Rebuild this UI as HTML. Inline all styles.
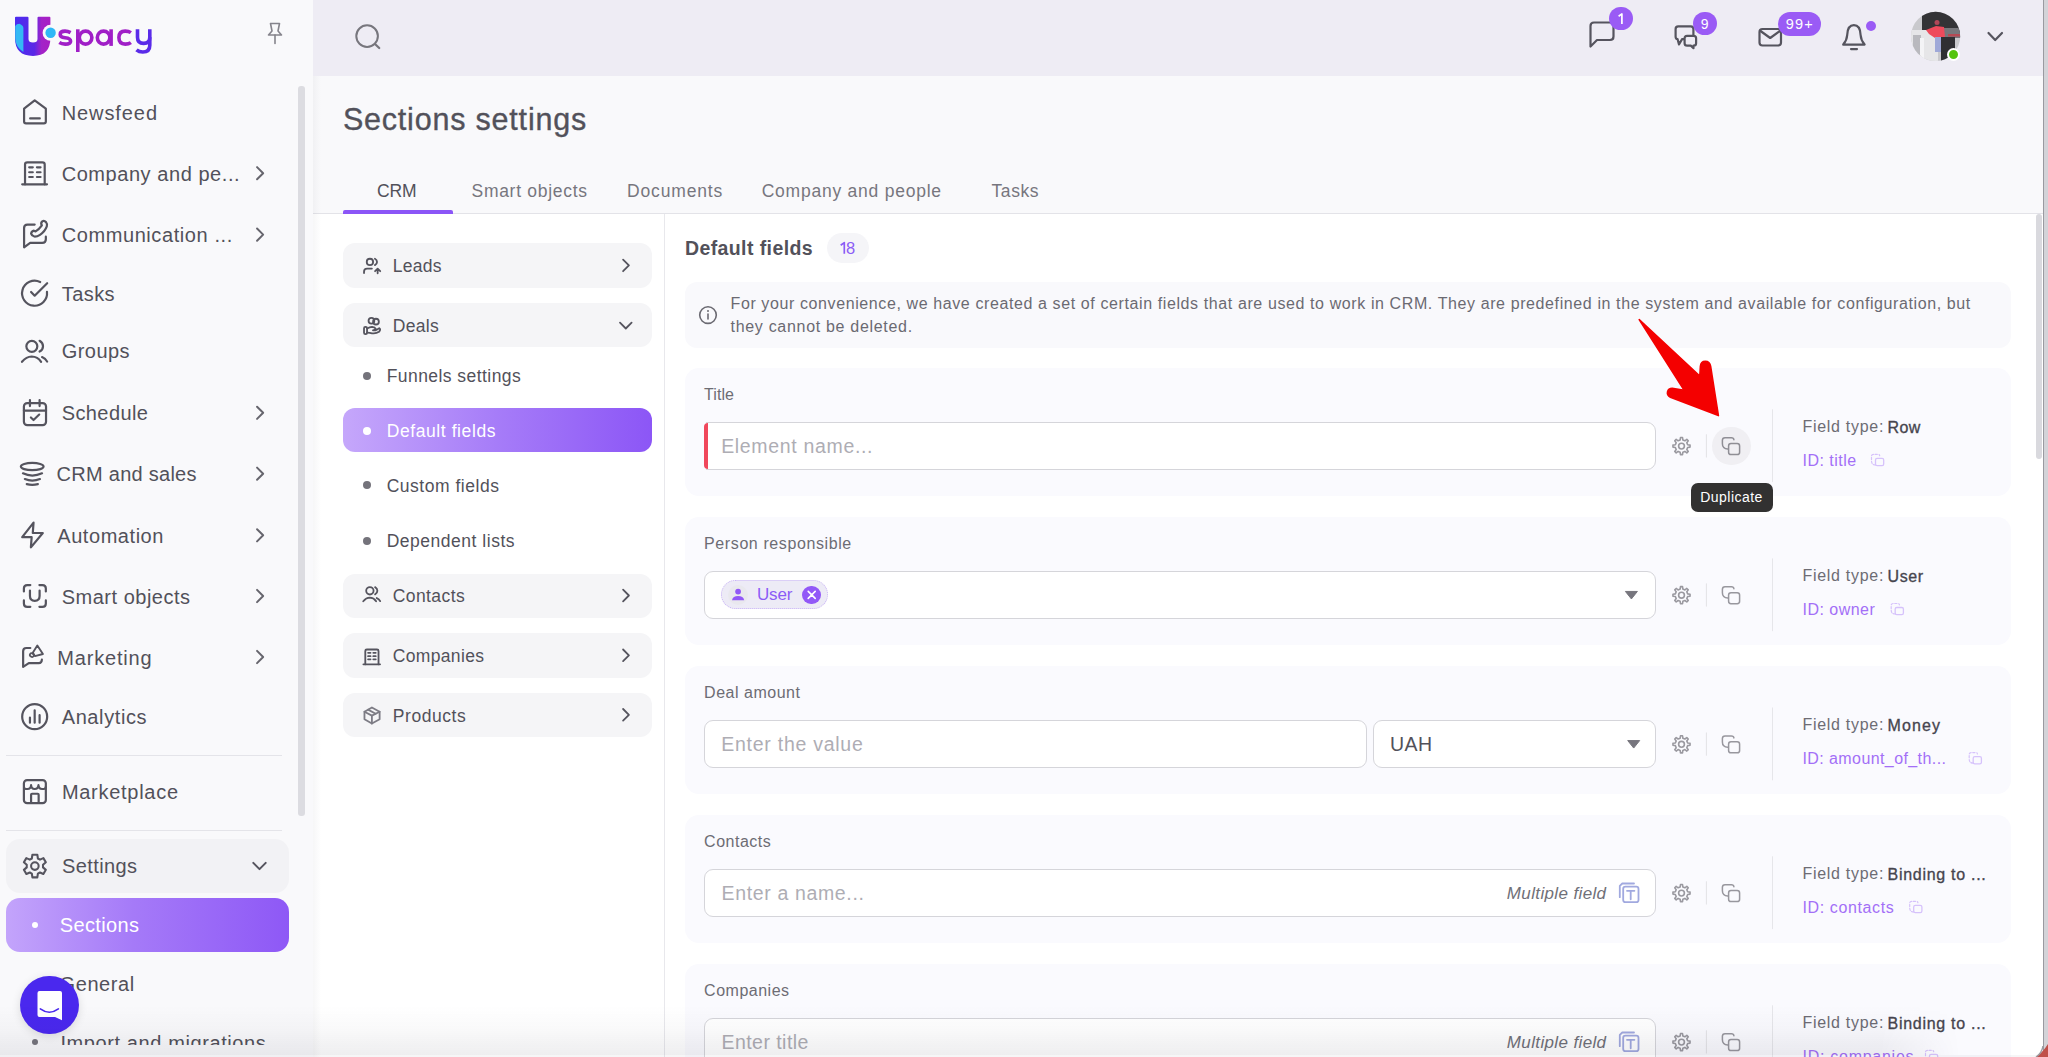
<!DOCTYPE html>
<html><head><meta charset="utf-8">
<style>
*{box-sizing:border-box;margin:0;padding:0}
html,body{width:2048px;height:1057px;overflow:hidden;background:#fff;font-family:"Liberation Sans",sans-serif;color:#4a4953}
.a{position:absolute}
.t{position:absolute;white-space:nowrap}
svg.ov{position:absolute;left:0;top:0;overflow:visible}
.s{fill:none;stroke:#55545e;stroke-width:2;stroke-linecap:round;stroke-linejoin:round}
.card{position:absolute;border-radius:12px;background:#f5f5f7}
.fc{position:absolute;left:685px;width:1326px;height:128px;border-radius:14px;background:#fafafe}
.inp{position:absolute;background:#fff;border:1px solid #d5d5da;border-radius:9px}
</style></head><body>

<div class="a" style="left:0;top:0;width:313px;height:1057px;background:#f9f9fb"></div>
<div class="a" style="left:313px;top:0;width:1730px;height:75.5px;background:#eeecf4"></div>
<div class="a" style="left:313px;top:75.5px;width:1730px;height:137.5px;background:#f9f9fb"></div>
<div class="a" style="left:313px;top:213px;width:1730px;height:1px;background:#e3e3e8"></div>
<div class="a" style="left:313px;top:75.5px;width:8px;height:982px;background:linear-gradient(90deg,rgba(20,20,40,0.035),rgba(20,20,40,0))"></div>
<svg class="ov" width="160" height="80" style="left:0;top:0">
<defs>
<linearGradient id="lgU" x1="0" y1="0" x2="1" y2="0"><stop offset="0" stop-color="#4b2cf0"/><stop offset="0.55" stop-color="#5a28e6"/><stop offset="0.75" stop-color="#a323c8"/><stop offset="1" stop-color="#a81fc3"/></linearGradient>
</defs>
<path d="M15 17.5 Q15 16.8 16 16.8 H27.5 Q28.5 16.8 28.5 17.8 V39 Q28.5 42.5 33 42.5 Q37.5 42.5 37.5 39 V17.8 Q37.5 16.8 38.5 16.8 H49.5 Q50.4 16.8 50.4 17.8 V38 Q50.4 55.9 33 55.9 Q15 55.9 15 38 Z" fill="url(#lgU)"/>
<path d="M15.2 26 Q16.5 23.8 19.5 23.8 Q23.4 25.5 23.4 28 V52 Q15.2 47 15.2 38 Z" fill="#34b9f4"/>
<circle cx="50.6" cy="32.8" r="8" fill="#f9f9fb"/>
<circle cx="50.6" cy="32.8" r="5.2" fill="#2fb8f6"/>
</svg>
<svg class="ov" width="160" height="80"><g fill="none" stroke-width="3.6" stroke-linecap="butt">
<path stroke="#a01fc7" d="M70.6 32.6 Q68 31.1 65 31.1 Q60.2 31.1 60.2 34.4 Q60.2 37.2 65 37.8 Q70.6 38.4 70.6 41.2 Q70.6 44.1 65.2 44.1 Q61.6 44.1 59.3 42.6"/>
<path stroke="#a01fc7" d="M77.8 29.3 V52"/><ellipse stroke="#a01fc7" cx="85.6" cy="37.6" rx="6.3" ry="6.5"/>
<ellipse stroke="#a01fc7" cx="103.6" cy="37.6" rx="6.3" ry="6.5"/><path stroke="#a01fc7" d="M111.1 29.3 V45.9"/>
<path stroke="#a01fc7" d="M130.9 32.6 Q128.8 31.1 125.2 31.1 Q118.9 31.1 118.9 37.6 Q118.9 44.1 125.2 44.1 Q128.8 44.1 130.9 42.6"/>
<path stroke="#5a2be9" d="M137.5 29.3 V37.2 Q137.5 43.4 143.6 43.4 Q149.8 43.4 149.8 37.2"/><path stroke="#5a2be9" d="M149.8 29.3 V45.2 Q149.8 52 142.8 52 Q139 52 136.5 49.8"/>
</g></svg>
<svg class="ov" width="300" height="60" style="left:0;top:0"><g class="s" style="stroke:#85848c;stroke-width:1.6">
<path d="M270.5 23.5 H279.5 L278 31 L281.5 35 H268.5 L272 31 Z"/><path d="M275 35 V43.5"/></g></svg>
<div class="a" style="left:297.5px;top:85.5px;width:7.2px;height:730px;border-radius:3px;background:#dcdce1"></div>
<svg class="ov" width="40" height="40" viewBox="0 0 1057 1057" style="left:15px;top:90px"><g fill="none" stroke="#55545e" stroke-width="58" stroke-linecap="round" stroke-linejoin="round" ><path d="M240 490 L520 272 L815 490 V830 Q815 880 765 880 H290 Q240 880 240 830 Z"/><path d="M400 750 H655"/></g></svg>
<div class="t" style="left:61.70px;top:103.07px;font-size:20px;line-height:20px;color:#52515a;letter-spacing:0.913px;">Newsfeed</div>
<svg class="ov" width="40" height="40" viewBox="0 0 1057 1057" style="left:15px;top:152px"><g fill="none" stroke="#55545e" stroke-width="58" stroke-linecap="round" stroke-linejoin="round" ><path d="M265 855 V330 Q265 272 325 272 H725 Q785 272 785 330 V855"/><path d="M190 855 H845"/><path d="M375 405 H470 M580 405 H675 M375 535 H470 M580 535 H675 M375 660 H470 M580 660 H675"/></g></svg>
<div class="t" style="left:61.70px;top:163.87px;font-size:20px;line-height:20px;color:#52515a;letter-spacing:0.554px;">Company and pe...</div>
<svg class="ov" width="2048" height="1057" style="left:0;top:0;pointer-events:none"><path d="M257.05 167.10 L263.15 173.20 L257.05 179.30" fill="none" stroke="#66656d" stroke-width="2" stroke-linecap="round" stroke-linejoin="round"/></svg>
<svg class="ov" width="40" height="40" viewBox="0 0 1057 1057" style="left:15px;top:214px"><g fill="none" stroke="#55545e" stroke-width="58" stroke-linecap="round" stroke-linejoin="round" ><path d="M520 280 H330 Q240 280 240 370 V880 L400 765 H720 Q815 765 815 670 V600"/><path d="M545 460 Q640 400 710 300 Q670 240 720 195 Q770 165 820 215 Q860 260 840 330 Q790 470 660 550 Q580 600 510 595 Q445 580 425 520 Q440 450 500 440 Z"/></g></svg>
<div class="t" style="left:61.70px;top:225.27px;font-size:20px;line-height:20px;color:#52515a;letter-spacing:0.587px;">Communication ...</div>
<svg class="ov" width="2048" height="1057" style="left:0;top:0;pointer-events:none"><path d="M257.05 228.50 L263.15 234.60 L257.05 240.70" fill="none" stroke="#66656d" stroke-width="2" stroke-linecap="round" stroke-linejoin="round"/></svg>
<svg class="ov" width="40" height="40" viewBox="0 0 1057 1057" style="left:15px;top:273px"><g fill="none" stroke="#55545e" stroke-width="58" stroke-linecap="round" stroke-linejoin="round" ><path d="M665 240 A 330 330 0 1 0 845 500"/><path d="M425 500 L520 600 L850 270"/></g></svg>
<div class="t" style="left:61.70px;top:283.67px;font-size:20px;line-height:20px;color:#52515a;letter-spacing:0.444px;">Tasks</div>
<svg class="ov" width="40" height="40" viewBox="0 0 1057 1057" style="left:15px;top:334px"><g fill="none" stroke="#55545e" stroke-width="58" stroke-linecap="round" stroke-linejoin="round" ><circle cx="445" cy="325" r="145"/><path d="M650 180 Q740 230 740 325 Q740 420 650 465"/><path d="M185 735 Q300 600 440 595 Q600 600 690 735"/><path d="M715 610 Q810 650 850 730"/></g></svg>
<div class="t" style="left:61.70px;top:341.47px;font-size:20px;line-height:20px;color:#52515a;letter-spacing:0.463px;">Groups</div>
<svg class="ov" width="40" height="40" viewBox="0 0 1057 1057" style="left:15px;top:393px"><g fill="none" stroke="#55545e" stroke-width="58" stroke-linecap="round" stroke-linejoin="round" ><rect x="235" y="265" width="585" height="585" rx="90"/><path d="M395 185 V345 M650 185 V345"/><path d="M235 465 H820"/><path d="M420 645 L490 715 L640 570"/></g></svg>
<div class="t" style="left:61.70px;top:403.47px;font-size:20px;line-height:20px;color:#52515a;letter-spacing:0.404px;">Schedule</div>
<svg class="ov" width="2048" height="1057" style="left:0;top:0;pointer-events:none"><path d="M257.05 406.70 L263.15 412.80 L257.05 418.90" fill="none" stroke="#66656d" stroke-width="2" stroke-linecap="round" stroke-linejoin="round"/></svg>
<svg class="ov" width="40" height="40" viewBox="0 0 1057 1057" style="left:15px;top:455px"><g fill="none" stroke="#55545e" stroke-width="58" stroke-linecap="round" stroke-linejoin="round" ><ellipse cx="455" cy="305" rx="300" ry="95"/><path d="M210 485 Q455 600 715 485"/><path d="M260 635 Q455 715 660 635"/><path d="M310 770 Q455 810 605 770"/></g></svg>
<div class="t" style="left:56.60px;top:464.37px;font-size:20px;line-height:20px;color:#52515a;letter-spacing:0.265px;">CRM and sales</div>
<svg class="ov" width="2048" height="1057" style="left:0;top:0;pointer-events:none"><path d="M257.05 467.60 L263.15 473.70 L257.05 479.80" fill="none" stroke="#66656d" stroke-width="2" stroke-linecap="round" stroke-linejoin="round"/></svg>
<svg class="ov" width="40" height="40" viewBox="0 0 1057 1057" style="left:15px;top:515px"><g fill="none" stroke="#55545e" stroke-width="58" stroke-linecap="round" stroke-linejoin="round" ><path d="M490 200 L190 585 H440 L420 855 L735 475 H470 Z"/></g></svg>
<div class="t" style="left:57.30px;top:525.97px;font-size:20px;line-height:20px;color:#52515a;letter-spacing:0.55px;">Automation</div>
<svg class="ov" width="2048" height="1057" style="left:0;top:0;pointer-events:none"><path d="M257.05 529.20 L263.15 535.30 L257.05 541.40" fill="none" stroke="#66656d" stroke-width="2" stroke-linecap="round" stroke-linejoin="round"/></svg>
<svg class="ov" width="40" height="40" viewBox="0 0 1057 1057" style="left:15px;top:576px"><g fill="none" stroke="#55545e" stroke-width="58" stroke-linecap="round" stroke-linejoin="round" ><path d="M235 410 V330 Q235 240 325 240 H405"/><path d="M645 240 H725 Q815 240 815 330 V410"/><path d="M235 645 V725 Q235 815 325 815 H405"/><path d="M645 815 H725 Q815 815 815 725 V645"/><path d="M395 385 V530 Q395 655 522 655 Q650 655 650 530 V385"/></g></svg>
<div class="t" style="left:61.70px;top:586.67px;font-size:20px;line-height:20px;color:#52515a;letter-spacing:0.511px;">Smart objects</div>
<svg class="ov" width="2048" height="1057" style="left:0;top:0;pointer-events:none"><path d="M257.05 589.90 L263.15 596.00 L257.05 602.10" fill="none" stroke="#66656d" stroke-width="2" stroke-linecap="round" stroke-linejoin="round"/></svg>
<svg class="ov" width="40" height="40" viewBox="0 0 1057 1057" style="left:15px;top:637px"><g fill="none" stroke="#55545e" stroke-width="58" stroke-linecap="round" stroke-linejoin="round" ><path d="M405 290 H300 Q215 290 215 375 V790 L365 690 H630 Q705 690 710 600"/><path d="M590 225 L738 450 L525 505 L470 415 Z" stroke-width="50"/><ellipse cx="445" cy="478" rx="55" ry="45" transform="rotate(35 445 478)" stroke-width="45"/></g></svg>
<div class="t" style="left:57.30px;top:647.67px;font-size:20px;line-height:20px;color:#52515a;letter-spacing:0.814px;">Marketing</div>
<svg class="ov" width="2048" height="1057" style="left:0;top:0;pointer-events:none"><path d="M257.05 650.90 L263.15 657.00 L257.05 663.10" fill="none" stroke="#66656d" stroke-width="2" stroke-linecap="round" stroke-linejoin="round"/></svg>
<svg class="ov" width="40" height="40" viewBox="0 0 1057 1057" style="left:15px;top:697px"><g fill="none" stroke="#55545e" stroke-width="58" stroke-linecap="round" stroke-linejoin="round" ><circle cx="520" cy="520" r="330"/><path d="M395 545 V680 M520 350 V680 M650 480 V680"/></g></svg>
<div class="t" style="left:61.70px;top:706.67px;font-size:20px;line-height:20px;color:#52515a;letter-spacing:0.609px;">Analytics</div>
<svg class="ov" width="40" height="40" viewBox="0 0 1057 1057" style="left:15px;top:772px"><g fill="none" stroke="#55545e" stroke-width="58" stroke-linecap="round" stroke-linejoin="round" ><rect x="235" y="215" width="580" height="610" rx="85"/><path d="M240 400 Q240 450 330 450 Q420 450 425 345 Q430 450 520 450 Q610 450 620 345 Q630 450 715 450 Q810 450 810 400" stroke-width="55"/><path d="M425 810 V600 Q425 575 450 575 H600 Q625 575 625 600 V810"/></g></svg>
<div class="t" style="left:61.90px;top:781.97px;font-size:20px;line-height:20px;color:#52515a;letter-spacing:0.719px;">Marketplace</div>
<div class="a" style="left:6px;top:754.5px;width:276px;height:1px;background:#e4e4e9"></div>
<div class="a" style="left:6px;top:829.5px;width:276px;height:1px;background:#e4e4e9"></div>
<div class="a" style="left:6px;top:839px;width:283px;height:54px;border-radius:14px;background:#f2f2f5"></div>
<svg class="ov" width="40" height="40" viewBox="0 0 1057 1057" style="left:15px;top:846px"><g fill="none" stroke="#55545e" stroke-width="58" stroke-linecap="round" stroke-linejoin="round" ><path d="M460 230 H590 L605 330 L660 360 L750 320 L815 430 L740 495 V565 L815 630 L750 740 L660 700 L605 730 L590 830 H460 L445 730 L390 700 L300 740 L235 630 L310 565 V495 L235 430 L300 320 L390 360 L445 330 Z" stroke-width="55"/><circle cx="525" cy="530" r="100" stroke-width="55"/></g></svg>
<div class="t" style="left:61.90px;top:856.07px;font-size:20px;line-height:20px;color:#52515a;letter-spacing:0.419px;">Settings</div>
<svg class="ov" width="2048" height="1057" style="left:0;top:0;pointer-events:none"><path d="M253.30 862.90 L259.50 869.10 L265.70 862.90" fill="none" stroke="#55545e" stroke-width="2" stroke-linecap="round" stroke-linejoin="round"/></svg>
<div class="a" style="left:6px;top:898px;width:283px;height:54px;border-radius:14px;background:linear-gradient(90deg,#c3a4fb 0%,#a57af8 45%,#8e58f6 100%)"></div>
<div class="a" style="left:32px;top:922px;width:6px;height:6px;border-radius:50%;background:#fff"></div>
<div class="t" style="left:59.80px;top:915.07px;font-size:20px;line-height:20px;color:#ffffff;letter-spacing:0.342px;">Sections</div>
<div class="a" style="left:32px;top:981px;width:6px;height:6px;border-radius:50%;background:#76757d"></div>
<div class="t" style="left:59.50px;top:974.07px;font-size:20px;line-height:20px;color:#52515a;letter-spacing:0.6px;">General</div>
<div class="a" style="left:0;top:1050px;width:313px;height:7px;background:#f9f9fb;z-index:0"></div>
<div class="a" style="left:0;top:1020px;width:313px;height:25px;overflow:hidden"><div class="t" style="left:60.4px;top:12.77px;font-size:20px;line-height:20px;color:#52515a;letter-spacing:0.6px">Import and migrations</div></div>
<div class="a" style="left:32px;top:1039px;width:6px;height:6px;border-radius:50%;background:#76757d"></div>
<div class="a" style="left:20px;top:975.5px;width:58.6px;height:58.6px;border-radius:50%;background:#4a28ee;box-shadow:0 2px 10px rgba(0,0,0,0.12)"></div>
<svg class="ov" width="2048" height="1057"><path d="M37.5 993 Q37.5 991 39.5 991 H60 Q62 991 62 993 V1020.2 L55 1017 H39.5 Q37.5 1017 37.5 1015 Z" fill="#fff"/>
<path d="M40.3 1008.9 Q49.3 1015.5 58.4 1008.9" fill="none" stroke="#4a28ee" stroke-width="1.6" stroke-linecap="round"/></svg>
<svg class="ov" width="2048" height="80"><g fill="none" stroke="#77767d" stroke-width="2" stroke-linecap="round" stroke-linejoin="round">
<circle cx="367.1" cy="36.1" r="10.8"/><path d="M375 44 L379.2 48" stroke-width="2.3"/></g></svg>
<svg class="ov" width="2048" height="80"><g fill="none" stroke="#55545e" stroke-width="2.2" stroke-linecap="round" stroke-linejoin="round">
<path d="M1590.5 46.5 V26 Q1590.5 22.5 1594 22.5 H1610 Q1613.5 22.5 1613.5 26 V36.5 Q1613.5 40 1610 40 H1597 Z"/>
<path d="M1693.4 36 V29 Q1693.4 26.4 1690.8 26.4 H1678.2 Q1675.6 26.4 1675.6 29 V36.5 Q1675.6 39 1677.6 39.2 L1679 44.4 L1682 39.2 H1684.6"/>
<path d="M1684.6 43.2 V38.3 Q1684.6 35.8 1687.1 35.8 H1693.6 Q1696.1 35.8 1696.1 38.3 V43.2 Q1696.1 45.6 1693.6 45.6 H1693.5 V48.2 L1690.8 45.6 H1687.1 Q1684.6 45.6 1684.6 43.2 Z" fill="#eeecf4"/>
<rect x="1759.5" y="29" width="21.5" height="16.5" rx="3"/><path d="M1760.5 31 L1770.2 38 L1780 31"/>
<path d="M1843.2 44.6 H1864.6 Q1861 40.5 1860.6 35 Q1860.2 25.2 1853.9 25.2 Q1847.6 25.2 1847.2 35 Q1846.8 40.5 1843.2 44.6 Z" />
<path d="M1851 49.1 H1857"/>
<path d="M1988.5 33 L1995.2 40 L2002 33"/>
</g></svg>
<div class="a" style="left:1609.2px;top:6.7px;width:23.8px;height:23.8px;border-radius:50%;background:#9a5bf5"></div>
<svg class="ov" width="2048" height="80"><path d="M1618.6 16.2 L1621.9 13.9 V23.9" fill="none" stroke="#fff" stroke-width="1.7" stroke-linejoin="round"/></svg>
<div class="a" style="left:1693.3px;top:11.7px;width:23.8px;height:23.8px;border-radius:50%;background:#9a5bf5"></div>
<div class="t" style="left:1700.70px;top:16.85px;font-size:14px;line-height:14px;color:#fff;">9</div>
<div class="a" style="left:1778.2px;top:11.7px;width:42.6px;height:24.3px;border-radius:12px;background:#9a5bf5"></div>
<div class="t" style="left:1785.80px;top:16.53px;font-size:14.5px;line-height:14.5px;color:#fff;letter-spacing:1.186px;">99+</div>
<div class="a" style="left:1865.7px;top:21px;width:10px;height:10px;border-radius:50%;background:#9a5bf5"></div>
<svg class="ov" width="2048" height="80"><defs><clipPath id="avc"><circle cx="1935.6" cy="36.4" r="24.6"/></clipPath></defs>
<g clip-path="url(#avc)">
<rect x="1910" y="11" width="52" height="52" fill="#c9c9cd"/>
<rect x="1922" y="11" width="40" height="22" fill="#333336"/>
<rect x="1940" y="28" width="22" height="10" fill="#77777c"/>
<rect x="1911" y="30" width="27" height="32" fill="#e6e6e8"/>
<rect x="1913" y="35" width="8" height="25" fill="#b9b9be"/>
<rect x="1920" y="38" width="4" height="22" fill="#f4f4f6"/>
<path d="M1926 30 L1936 26 L1944 27 L1945 37 L1935 38 L1929 34 Z" fill="#ee4a5c"/>
<circle cx="1937" cy="22.5" r="2.5" fill="#b04758"/>
<rect x="1935" y="37" width="6" height="15" fill="#9fa9d8"/>
<rect x="1941" y="37" width="14" height="24" fill="#2f2f33"/>
<rect x="1948" y="34" width="12" height="2.5" fill="#b44a54"/>
</g></svg>
<div class="a" style="left:1946.5px;top:47.5px;width:13.6px;height:13.6px;border-radius:50%;background:#55c40f;border:2.3px solid #fff"></div>
<div class="t" style="left:342.90px;top:104.38px;font-size:30.5px;line-height:30.5px;color:#52515a;letter-spacing:0.799px;-webkit-text-stroke:0.35px #52515a;">Sections settings</div>
<div class="t" style="left:377.00px;top:182.69px;font-size:17.5px;line-height:17.5px;color:#52515a;letter-spacing:-0.138px;">CRM</div>
<div class="t" style="left:471.50px;top:182.69px;font-size:17.5px;line-height:17.5px;color:#77767e;letter-spacing:0.714px;">Smart objects</div>
<div class="t" style="left:627.00px;top:182.69px;font-size:17.5px;line-height:17.5px;color:#77767e;letter-spacing:0.843px;">Documents</div>
<div class="t" style="left:761.70px;top:182.69px;font-size:17.5px;line-height:17.5px;color:#77767e;letter-spacing:0.763px;">Company and people</div>
<div class="t" style="left:991.60px;top:182.69px;font-size:17.5px;line-height:17.5px;color:#77767e;letter-spacing:0.529px;">Tasks</div>
<div class="a" style="left:343px;top:210px;width:109.5px;height:3.5px;border-radius:2px 2px 0 0;background:#8b55f7"></div>
<div class="a" style="left:664px;top:214px;width:1px;height:843px;background:#e8e8ec"></div>
<div class="card" style="left:343px;top:243.4px;width:309px;height:44.3px"></div>
<div class="card" style="left:343px;top:303.1px;width:309px;height:44.3px"></div>
<div class="card" style="left:343px;top:573.5px;width:309px;height:44.3px"></div>
<div class="card" style="left:343px;top:633.3px;width:309px;height:44.3px"></div>
<div class="card" style="left:343px;top:692.8px;width:309px;height:44.3px"></div>
<svg class="ov" width="32" height="32" viewBox="0 0 1057 1057" style="left:356px;top:250.0px"><g fill="none" stroke="#55545e" stroke-width="60" stroke-linecap="round" stroke-linejoin="round"><circle cx="460" cy="395" r="105"/><path d="M625 290 Q695 330 695 395 Q695 460 625 500"/><path d="M265 760 V715 Q265 615 365 615 H525"/><path d="M715 770 V615 M630 700 L715 615 L800 700"/></g></svg>
<div class="t" style="left:392.80px;top:258.39px;font-size:17.5px;line-height:17.5px;color:#52515a;letter-spacing:0.242px;">Leads</div>
<svg class="ov" width="2048" height="1057" style="left:0;top:0;pointer-events:none"><path d="M623.10 259.60 L628.90 265.40 L623.10 271.20" fill="none" stroke="#55545e" stroke-width="1.8" stroke-linecap="round" stroke-linejoin="round"/></svg>
<svg class="ov" width="32" height="32" viewBox="0 0 1057 1057" style="left:356px;top:309.70000000000005px"><g fill="none" stroke="#55545e" stroke-width="60" stroke-linecap="round" stroke-linejoin="round"><circle cx="510" cy="355" r="95"/><circle cx="660" cy="385" r="95"/><rect x="265" y="560" width="100" height="235" rx="45"/><path d="M370 610 Q450 570 530 560 Q630 575 650 620 Q630 660 560 670 H640 Q720 640 770 600 Q830 640 760 720 Q660 790 530 770 Q460 750 370 745"/></g></svg>
<div class="t" style="left:392.80px;top:318.09px;font-size:17.5px;line-height:17.5px;color:#52515a;letter-spacing:0.3px;">Deals</div>
<svg class="ov" width="2048" height="1057" style="left:0;top:0;pointer-events:none"><path d="M620.00 322.70 L625.80 328.50 L631.60 322.70" fill="none" stroke="#55545e" stroke-width="1.8" stroke-linecap="round" stroke-linejoin="round"/></svg>
<svg class="ov" width="32" height="32" viewBox="0 0 1057 1057" style="left:356px;top:580.1px"><g fill="none" stroke="#55545e" stroke-width="72" stroke-linecap="round" stroke-linejoin="round" transform="translate(528 528) scale(0.84) translate(-528 -528)"><circle cx="445" cy="325" r="145"/><path d="M650 180 Q740 230 740 325 Q740 420 650 465"/><path d="M185 735 Q300 600 440 595 Q600 600 690 735"/><path d="M715 610 Q810 650 850 730"/></g></svg>
<div class="t" style="left:392.80px;top:588.49px;font-size:17.5px;line-height:17.5px;color:#52515a;letter-spacing:0.399px;">Contacts</div>
<svg class="ov" width="2048" height="1057" style="left:0;top:0;pointer-events:none"><path d="M623.10 589.70 L628.90 595.50 L623.10 601.30" fill="none" stroke="#55545e" stroke-width="1.8" stroke-linecap="round" stroke-linejoin="round"/></svg>
<svg class="ov" width="32" height="32" viewBox="0 0 1057 1057" style="left:356px;top:639.9px"><g fill="none" stroke="#55545e" stroke-width="72" stroke-linecap="round" stroke-linejoin="round" transform="translate(528 528) scale(0.84) translate(-528 -528)"><path d="M265 855 V330 Q265 272 325 272 H725 Q785 272 785 330 V855"/><path d="M190 855 H845"/><path d="M375 405 H470 M580 405 H675 M375 535 H470 M580 535 H675 M375 660 H470 M580 660 H675"/></g></svg>
<div class="t" style="left:392.80px;top:648.29px;font-size:17.5px;line-height:17.5px;color:#52515a;letter-spacing:0.329px;">Companies</div>
<svg class="ov" width="2048" height="1057" style="left:0;top:0;pointer-events:none"><path d="M623.10 649.50 L628.90 655.30 L623.10 661.10" fill="none" stroke="#55545e" stroke-width="1.8" stroke-linecap="round" stroke-linejoin="round"/></svg>
<svg class="ov" width="32" height="32" viewBox="0 0 1057 1057" style="left:356px;top:699.4px"><g fill="none" stroke="#7d7c85" stroke-width="60" stroke-linecap="round" stroke-linejoin="round"><path d="M525 280 L780 420 V670 L525 810 L280 670 V420 Z"/><path d="M280 420 L525 550 L780 420 M525 550 V810"/><path d="M400 350 L650 485"/></g></svg>
<div class="t" style="left:392.80px;top:707.79px;font-size:17.5px;line-height:17.5px;color:#52515a;letter-spacing:0.541px;">Products</div>
<svg class="ov" width="2048" height="1057" style="left:0;top:0;pointer-events:none"><path d="M623.10 709.00 L628.90 714.80 L623.10 720.60" fill="none" stroke="#55545e" stroke-width="1.8" stroke-linecap="round" stroke-linejoin="round"/></svg>
<div class="a" style="left:363px;top:371.6px;width:8px;height:8px;border-radius:50%;background:#74737b"></div>
<div class="t" style="left:386.70px;top:368.39px;font-size:17.5px;line-height:17.5px;color:#52515a;letter-spacing:0.441px;">Funnels settings</div>
<div class="a" style="left:363px;top:481.3px;width:8px;height:8px;border-radius:50%;background:#74737b"></div>
<div class="t" style="left:386.70px;top:478.09px;font-size:17.5px;line-height:17.5px;color:#52515a;letter-spacing:0.52px;">Custom fields</div>
<div class="a" style="left:363px;top:536.7px;width:8px;height:8px;border-radius:50%;background:#74737b"></div>
<div class="t" style="left:386.70px;top:533.49px;font-size:17.5px;line-height:17.5px;color:#52515a;letter-spacing:0.516px;">Dependent lists</div>
<div class="a" style="left:343px;top:408.1px;width:309px;height:44.3px;border-radius:12px;background:linear-gradient(90deg,#c5a7fb 0%,#a67cf8 50%,#8c56f6 100%)"></div>
<div class="a" style="left:363px;top:426.5px;width:8px;height:8px;border-radius:50%;background:#fff"></div>
<div class="t" style="left:386.70px;top:422.99px;font-size:17.5px;line-height:17.5px;color:#fff;letter-spacing:0.584px;">Default fields</div>
<div class="t" style="left:684.90px;top:238.69px;font-size:19.5px;line-height:19.5px;color:#52515a;font-weight:700;letter-spacing:0.408px;">Default fields</div>
<div class="a" style="left:827.4px;top:233.4px;width:41.4px;height:29.6px;border-radius:15px;background:#f5f5f8"></div>
<svg class="ov" width="2048" height="1057"><path d="M840.7 245.2 L844.3 242.6 V253.7" fill="none" stroke="#8b5cf6" stroke-width="1.7" stroke-linejoin="round"/></svg>
<div class="t" style="left:846.10px;top:239.83px;font-size:16.5px;line-height:16.5px;color:#8b5cf6;">8</div>
<div class="a" style="left:685.4px;top:282.3px;width:1325.6px;height:65.7px;border-radius:12px;background:#f9f9fc"></div>
<svg class="ov" width="2048" height="1057"><g fill="none" stroke="#6b6a72" stroke-width="1.6" stroke-linecap="round"><circle cx="708" cy="315.1" r="8.3"/><path d="M708 314 V319"/></g><circle cx="708" cy="311" r="1" fill="#6b6a72"/></svg>
<div class="t" style="left:730.50px;top:296.26px;font-size:16px;line-height:16px;color:#6b6a72;letter-spacing:0.604px;">For your convenience, we have created a set of certain fields that are used to work in CRM. They are predefined in the system and available for configuration, but</div>
<div class="t" style="left:730.50px;top:319.36px;font-size:16px;line-height:16px;color:#6b6a72;letter-spacing:0.695px;">they cannot be deleted.</div>
<div class="fc" style="top:368.1px"></div>
<div class="t" style="left:704.10px;top:386.86px;font-size:16px;line-height:16px;color:#6d6c74;letter-spacing:0.066px;">Title</div>
<div class="inp" style="left:704.4px;top:422.2px;width:952px;height:47.6px"></div>
<div class="a" style="left:704.2px;top:422.8px;width:12px;height:46.4px;background:#fff;border-radius:5px 0 0 5px"></div>
<div class="a" style="left:706px;top:422.2px;width:12px;height:47.6px;border-top:1px solid #d5d5da;border-bottom:1px solid #d5d5da"></div>
<div class="a" style="left:704.2px;top:422.8px;width:4.2px;height:46.4px;background:#f0475c;border-radius:5px 0 0 5px"></div>
<div class="t" style="left:721.20px;top:437.39px;font-size:19.5px;line-height:19.5px;color:#aeadb4;letter-spacing:0.667px;">Element name...</div>
<div class="a" style="left:1712.4px;top:426.5px;width:38.6px;height:38.6px;border-radius:50%;background:#f0eff3"></div>
<div class="t" style="left:1802.50px;top:419.06px;font-size:16px;line-height:16px;color:#6d6c74;letter-spacing:0.703px;">Field type:</div>
<div class="t" style="left:1887.50px;top:419.56px;font-size:16px;line-height:16px;color:#46454e;letter-spacing:0.423px;-webkit-text-stroke:0.32px #46454e;">Row</div>
<div class="t" style="left:1802.50px;top:452.66px;font-size:16px;line-height:16px;color:#a36ff7;letter-spacing:0.476px;">ID: title</div>
<div class="fc" style="top:517.2px"></div>
<div class="t" style="left:704.10px;top:535.96px;font-size:16px;line-height:16px;color:#6d6c74;letter-spacing:0.596px;">Person responsible</div>
<div class="inp" style="left:704.4px;top:571.3px;width:952px;height:47.6px"></div>
<div class="a" style="left:721.2px;top:580px;width:106.6px;height:29.3px;border-radius:15px;background:#edebf6;border:1px dotted #c9b3f8"></div>
<div class="a" style="left:728px;top:585px;width:20px;height:20px;border-radius:50%;background:#e9e8ee"></div>
<div class="t" style="left:757.00px;top:586.11px;font-size:17px;line-height:17px;color:#8b5cf6;letter-spacing:-0.177px;">User</div>
<div class="a" style="left:802.4px;top:585.6px;width:18.6px;height:18.6px;border-radius:50%;background:#9258f7"></div>
<div class="t" style="left:1802.50px;top:568.16px;font-size:16px;line-height:16px;color:#6d6c74;letter-spacing:0.703px;">Field type:</div>
<div class="t" style="left:1887.50px;top:568.66px;font-size:16px;line-height:16px;color:#46454e;letter-spacing:0.616px;-webkit-text-stroke:0.32px #46454e;">User</div>
<div class="t" style="left:1802.50px;top:601.76px;font-size:16px;line-height:16px;color:#a36ff7;letter-spacing:0.482px;">ID: owner</div>
<div class="fc" style="top:666.3px"></div>
<div class="t" style="left:704.10px;top:685.06px;font-size:16px;line-height:16px;color:#6d6c74;letter-spacing:0.513px;">Deal amount</div>
<div class="inp" style="left:704.4px;top:720.4px;width:662.3px;height:47.6px"></div>
<div class="inp" style="left:1372.8px;top:720.4px;width:283.6px;height:47.6px"></div>
<div class="t" style="left:721.30px;top:735.39px;font-size:19.5px;line-height:19.5px;color:#aeadb4;letter-spacing:0.734px;">Enter the value</div>
<div class="t" style="left:1390.00px;top:735.19px;font-size:19.5px;line-height:19.5px;color:#52515a;letter-spacing:0.456px;">UAH</div>
<div class="t" style="left:1802.50px;top:717.26px;font-size:16px;line-height:16px;color:#6d6c74;letter-spacing:0.703px;">Field type:</div>
<div class="t" style="left:1887.50px;top:717.76px;font-size:16px;line-height:16px;color:#46454e;letter-spacing:1.094px;-webkit-text-stroke:0.32px #46454e;">Money</div>
<div class="t" style="left:1802.50px;top:750.86px;font-size:16px;line-height:16px;color:#a36ff7;letter-spacing:0.409px;">ID: amount_of_th...</div>
<div class="fc" style="top:815.1px"></div>
<div class="t" style="left:704.10px;top:833.86px;font-size:16px;line-height:16px;color:#6d6c74;letter-spacing:0.5px;">Contacts</div>
<div class="inp" style="left:704.4px;top:869.2px;width:952px;height:47.6px"></div>
<div class="t" style="left:721.50px;top:884.19px;font-size:19.5px;line-height:19.5px;color:#aeadb4;letter-spacing:0.65px;">Enter a name...</div>
<div class="t" style="left:1506.80px;top:884.71px;font-size:17px;line-height:17px;color:#707078;letter-spacing:0.367px;font-style:italic;">Multiple field</div>
<div class="t" style="left:1802.50px;top:866.06px;font-size:16px;line-height:16px;color:#6d6c74;letter-spacing:0.703px;">Field type:</div>
<div class="t" style="left:1887.50px;top:866.56px;font-size:16px;line-height:16px;color:#46454e;letter-spacing:0.715px;-webkit-text-stroke:0.32px #46454e;">Binding to ...</div>
<div class="t" style="left:1802.50px;top:899.66px;font-size:16px;line-height:16px;color:#a36ff7;letter-spacing:0.62px;">ID: contacts</div>
<div class="fc" style="top:964.1px"></div>
<div class="t" style="left:704.10px;top:982.86px;font-size:16px;line-height:16px;color:#6d6c74;letter-spacing:0.5px;">Companies</div>
<div class="inp" style="left:704.4px;top:1018.2px;width:952px;height:47.6px"></div>
<div class="t" style="left:721.50px;top:1033.19px;font-size:19.5px;line-height:19.5px;color:#aeadb4;letter-spacing:0.45px;">Enter title</div>
<div class="t" style="left:1506.80px;top:1033.71px;font-size:17px;line-height:17px;color:#707078;letter-spacing:0.367px;font-style:italic;">Multiple field</div>
<div class="t" style="left:1802.50px;top:1015.06px;font-size:16px;line-height:16px;color:#6d6c74;letter-spacing:0.703px;">Field type:</div>
<div class="t" style="left:1887.50px;top:1015.56px;font-size:16px;line-height:16px;color:#46454e;letter-spacing:0.715px;-webkit-text-stroke:0.32px #46454e;">Binding to ...</div>
<div class="t" style="left:1802.50px;top:1048.66px;font-size:16px;line-height:16px;color:#a36ff7;letter-spacing:0.728px;">ID: companies</div>
<svg class="ov" width="2048" height="1057"><path d="M1687.65 444.75 L1690.04 445.09 L1690.04 447.11 L1687.65 447.45 L1686.81 449.50 L1688.25 451.42 L1686.82 452.85 L1684.90 451.41 L1682.85 452.25 L1682.51 454.64 L1680.49 454.64 L1680.15 452.25 L1678.10 451.41 L1676.18 452.85 L1674.75 451.42 L1676.19 449.50 L1675.35 447.45 L1672.96 447.11 L1672.96 445.09 L1675.35 444.75 L1676.19 442.70 L1674.75 440.78 L1676.18 439.35 L1678.10 440.79 L1680.15 439.95 L1680.49 437.56 L1682.51 437.56 L1682.85 439.95 L1684.90 440.79 L1686.82 439.35 L1688.25 440.78 L1686.81 442.70 Z" fill="none" stroke="#9a99a0" stroke-width="1.6" stroke-linejoin="round"/><circle cx="1681.5" cy="446.1" r="2.9" fill="none" stroke="#9a99a0" stroke-width="1.6"/><path d="M1706.4 434.3 V457.5" stroke="#e2e2e6" stroke-width="1"/><path d="M1727.80 449.00 Q1722.40 448.70 1722.40 443.70 V440.30 Q1722.40 437.70 1725.00 437.70 H1731.40 Q1733.70 437.70 1733.90 439.70" fill="none" stroke="#8f8e95" stroke-width="1.5" stroke-linecap="round"/><rect x="1728.60" y="443.60" width="11" height="11" rx="2.4" fill="none" stroke="#8f8e95" stroke-width="1.5"/><path d="M1772.5 409.3 V482.1" stroke="#e6e6ea" stroke-width="1"/><circle cx="738.1" cy="591.6" r="2.9" fill="#9258f7"/><path d="M732 600.2 Q732.8 596 738.1 596 Q743.4 596 744.2 600.2 Z" fill="#9258f7"/><path d="M808.2 591.4 L815.2 598.4 M815.2 591.4 L808.2 598.4" stroke="#fff" stroke-width="1.6" stroke-linecap="round"/><path d="M1625.40 591.45 H1637.40 L1631.40 598.95 Z" fill="#77767e" stroke="#77767e" stroke-width="1" stroke-linejoin="round"/><path d="M1687.65 593.85 L1690.04 594.19 L1690.04 596.21 L1687.65 596.55 L1686.81 598.60 L1688.25 600.52 L1686.82 601.95 L1684.90 600.51 L1682.85 601.35 L1682.51 603.74 L1680.49 603.74 L1680.15 601.35 L1678.10 600.51 L1676.18 601.95 L1674.75 600.52 L1676.19 598.60 L1675.35 596.55 L1672.96 596.21 L1672.96 594.19 L1675.35 593.85 L1676.19 591.80 L1674.75 589.88 L1676.18 588.45 L1678.10 589.89 L1680.15 589.05 L1680.49 586.66 L1682.51 586.66 L1682.85 589.05 L1684.90 589.89 L1686.82 588.45 L1688.25 589.88 L1686.81 591.80 Z" fill="none" stroke="#9a99a0" stroke-width="1.6" stroke-linejoin="round"/><circle cx="1681.5" cy="595.2" r="2.9" fill="none" stroke="#9a99a0" stroke-width="1.6"/><path d="M1706.4 583.4 V606.6" stroke="#e2e2e6" stroke-width="1"/><path d="M1727.80 598.10 Q1722.40 597.80 1722.40 592.80 V589.40 Q1722.40 586.80 1725.00 586.80 H1731.40 Q1733.70 586.80 1733.90 588.80" fill="none" stroke="#98979e" stroke-width="1.5" stroke-linecap="round"/><rect x="1728.60" y="592.70" width="11" height="11" rx="2.4" fill="none" stroke="#98979e" stroke-width="1.5"/><path d="M1772.5 558.4 V631.2" stroke="#e6e6ea" stroke-width="1"/><path d="M1627.70 740.55 H1639.70 L1633.70 748.05 Z" fill="#77767e" stroke="#77767e" stroke-width="1" stroke-linejoin="round"/><path d="M1687.65 742.95 L1690.04 743.29 L1690.04 745.31 L1687.65 745.65 L1686.81 747.70 L1688.25 749.62 L1686.82 751.05 L1684.90 749.61 L1682.85 750.45 L1682.51 752.84 L1680.49 752.84 L1680.15 750.45 L1678.10 749.61 L1676.18 751.05 L1674.75 749.62 L1676.19 747.70 L1675.35 745.65 L1672.96 745.31 L1672.96 743.29 L1675.35 742.95 L1676.19 740.90 L1674.75 738.98 L1676.18 737.55 L1678.10 738.99 L1680.15 738.15 L1680.49 735.76 L1682.51 735.76 L1682.85 738.15 L1684.90 738.99 L1686.82 737.55 L1688.25 738.98 L1686.81 740.90 Z" fill="none" stroke="#9a99a0" stroke-width="1.6" stroke-linejoin="round"/><circle cx="1681.5" cy="744.3" r="2.9" fill="none" stroke="#9a99a0" stroke-width="1.6"/><path d="M1706.4 732.5 V755.7" stroke="#e2e2e6" stroke-width="1"/><path d="M1727.80 747.20 Q1722.40 746.90 1722.40 741.90 V738.50 Q1722.40 735.90 1725.00 735.90 H1731.40 Q1733.70 735.90 1733.90 737.90" fill="none" stroke="#98979e" stroke-width="1.5" stroke-linecap="round"/><rect x="1728.60" y="741.80" width="11" height="11" rx="2.4" fill="none" stroke="#98979e" stroke-width="1.5"/><path d="M1772.5 707.5 V780.3" stroke="#e6e6ea" stroke-width="1"/><g fill="none" stroke="#a1a9df" stroke-width="1.8" stroke-linecap="round" stroke-linejoin="round" transform="translate(0 -0.10)"><path d="M1619.8 897.3 V886 L1622.3 883.6 H1634"/><rect x="1623.2" y="886.8" width="15.3" height="15.4" rx="2.2"/><path d="M1627 890.9 H1634.4 M1630.7 890.9 V899.4"/></g><path d="M1687.65 891.75 L1690.04 892.09 L1690.04 894.11 L1687.65 894.45 L1686.81 896.50 L1688.25 898.42 L1686.82 899.85 L1684.90 898.41 L1682.85 899.25 L1682.51 901.64 L1680.49 901.64 L1680.15 899.25 L1678.10 898.41 L1676.18 899.85 L1674.75 898.42 L1676.19 896.50 L1675.35 894.45 L1672.96 894.11 L1672.96 892.09 L1675.35 891.75 L1676.19 889.70 L1674.75 887.78 L1676.18 886.35 L1678.10 887.79 L1680.15 886.95 L1680.49 884.56 L1682.51 884.56 L1682.85 886.95 L1684.90 887.79 L1686.82 886.35 L1688.25 887.78 L1686.81 889.70 Z" fill="none" stroke="#9a99a0" stroke-width="1.6" stroke-linejoin="round"/><circle cx="1681.5" cy="893.1" r="2.9" fill="none" stroke="#9a99a0" stroke-width="1.6"/><path d="M1706.4 881.3 V904.5" stroke="#e2e2e6" stroke-width="1"/><path d="M1727.80 896.00 Q1722.40 895.70 1722.40 890.70 V887.30 Q1722.40 884.70 1725.00 884.70 H1731.40 Q1733.70 884.70 1733.90 886.70" fill="none" stroke="#98979e" stroke-width="1.5" stroke-linecap="round"/><rect x="1728.60" y="890.60" width="11" height="11" rx="2.4" fill="none" stroke="#98979e" stroke-width="1.5"/><path d="M1772.5 856.3 V929.1" stroke="#e6e6ea" stroke-width="1"/><g fill="none" stroke="#a1a9df" stroke-width="1.8" stroke-linecap="round" stroke-linejoin="round" transform="translate(0 148.90)"><path d="M1619.8 897.3 V886 L1622.3 883.6 H1634"/><rect x="1623.2" y="886.8" width="15.3" height="15.4" rx="2.2"/><path d="M1627 890.9 H1634.4 M1630.7 890.9 V899.4"/></g><path d="M1687.65 1040.75 L1690.04 1041.09 L1690.04 1043.11 L1687.65 1043.45 L1686.81 1045.50 L1688.25 1047.42 L1686.82 1048.85 L1684.90 1047.41 L1682.85 1048.25 L1682.51 1050.64 L1680.49 1050.64 L1680.15 1048.25 L1678.10 1047.41 L1676.18 1048.85 L1674.75 1047.42 L1676.19 1045.50 L1675.35 1043.45 L1672.96 1043.11 L1672.96 1041.09 L1675.35 1040.75 L1676.19 1038.70 L1674.75 1036.78 L1676.18 1035.35 L1678.10 1036.79 L1680.15 1035.95 L1680.49 1033.56 L1682.51 1033.56 L1682.85 1035.95 L1684.90 1036.79 L1686.82 1035.35 L1688.25 1036.78 L1686.81 1038.70 Z" fill="none" stroke="#9a99a0" stroke-width="1.6" stroke-linejoin="round"/><circle cx="1681.5" cy="1042.1" r="2.9" fill="none" stroke="#9a99a0" stroke-width="1.6"/><path d="M1706.4 1030.3 V1053.5" stroke="#e2e2e6" stroke-width="1"/><path d="M1727.80 1045.00 Q1722.40 1044.70 1722.40 1039.70 V1036.30 Q1722.40 1033.70 1725.00 1033.70 H1731.40 Q1733.70 1033.70 1733.90 1035.70" fill="none" stroke="#98979e" stroke-width="1.5" stroke-linecap="round"/><rect x="1728.60" y="1039.60" width="11" height="11" rx="2.4" fill="none" stroke="#98979e" stroke-width="1.5"/><path d="M1772.5 1005.3 V1078.1" stroke="#e6e6ea" stroke-width="1"/></svg>
<svg class="ov" width="2048" height="1057"><path d="M1875.50 464.90 Q1871.50 464.90 1871.50 460.90 V456.40 Q1871.50 454.40 1873.50 454.40 H1878.00 Q1879.70 454.40 1879.70 455.70" fill="none" stroke="#d6c2fb" stroke-width="1.2" stroke-linecap="round" stroke-dasharray="2.2 1.6"/><rect x="1875.50" y="458.40" width="8.2" height="7.2" rx="1.6" fill="none" stroke="#d6c2fb" stroke-width="1.3"/><path d="M1895.20 614.00 Q1891.20 614.00 1891.20 610.00 V605.50 Q1891.20 603.50 1893.20 603.50 H1897.70 Q1899.40 603.50 1899.40 604.80" fill="none" stroke="#d6c2fb" stroke-width="1.2" stroke-linecap="round" stroke-dasharray="2.2 1.6"/><rect x="1895.20" y="607.50" width="8.2" height="7.2" rx="1.6" fill="none" stroke="#d6c2fb" stroke-width="1.3"/><path d="M1973.20 763.10 Q1969.20 763.10 1969.20 759.10 V754.60 Q1969.20 752.60 1971.20 752.60 H1975.70 Q1977.40 752.60 1977.40 753.90" fill="none" stroke="#d6c2fb" stroke-width="1.2" stroke-linecap="round" stroke-dasharray="2.2 1.6"/><rect x="1973.20" y="756.60" width="8.2" height="7.2" rx="1.6" fill="none" stroke="#d6c2fb" stroke-width="1.3"/><path d="M1913.70 911.90 Q1909.70 911.90 1909.70 907.90 V903.40 Q1909.70 901.40 1911.70 901.40 H1916.20 Q1917.90 901.40 1917.90 902.70" fill="none" stroke="#d6c2fb" stroke-width="1.2" stroke-linecap="round" stroke-dasharray="2.2 1.6"/><rect x="1913.70" y="905.40" width="8.2" height="7.2" rx="1.6" fill="none" stroke="#d6c2fb" stroke-width="1.3"/><path d="M1929.50 1060.90 Q1925.50 1060.90 1925.50 1056.90 V1052.40 Q1925.50 1050.40 1927.50 1050.40 H1932.00 Q1933.70 1050.40 1933.70 1051.70" fill="none" stroke="#d6c2fb" stroke-width="1.2" stroke-linecap="round" stroke-dasharray="2.2 1.6"/><rect x="1929.50" y="1054.40" width="8.2" height="7.2" rx="1.6" fill="none" stroke="#d6c2fb" stroke-width="1.3"/></svg>
<div class="a" style="left:1690.8px;top:482.8px;width:81.8px;height:28.8px;border-radius:7px;background:#323131"></div>
<div class="t" style="left:1700.30px;top:490.35px;font-size:14px;line-height:14px;color:#ffffff;letter-spacing:0.465px;">Duplicate</div>
<svg class="ov" width="2048" height="1057"><path d="M1639.2 319.6 L1699.8 376.2 L1700.4 366.2 Q1700.8 361.2 1705.3 361.2 Q1709.8 361.2 1710.6 366.2 L1718.4 415.6 L1670.4 397.2 Q1666.8 395.5 1667.5 392 Q1668.4 388.4 1672.2 388.4 L1684.2 390.4 Z" fill="#f40000" stroke="#f40000" stroke-width="1.6" stroke-linejoin="round"/></svg>
<div class="a" style="left:2035.8px;top:214px;width:6.3px;height:245px;border-radius:3px;background:#d9d9de"></div>
<div class="a" style="left:2042.6px;top:0;width:1.4px;height:1057px;background:#9a9aa0"></div>
<div class="a" style="left:2044px;top:0;width:4px;height:1057px;background:#d3d3d8"></div>
<div class="a" style="left:0;top:1005px;width:2043px;height:50px;background:linear-gradient(180deg,rgba(30,30,50,0) 0%,rgba(30,30,50,0.025) 45%,rgba(30,30,50,0.075) 100%);-webkit-mask-image:linear-gradient(90deg,#000 0,#000 1880px,transparent 1960px)"></div>
<div class="a" style="left:0;top:1055px;width:2043px;height:2px;background:rgba(30,30,50,0.04)"></div>
<svg class="ov" width="2048" height="1057"><path d="M2048 1044 V1057 H2036 Q2043 1052 2048 1044 Z" fill="#c0504a"/><path d="M2043 1046 Q2042 1053 2036 1057" fill="none" stroke="#9a9aa0" stroke-width="1.5"/></svg>
</body></html>
